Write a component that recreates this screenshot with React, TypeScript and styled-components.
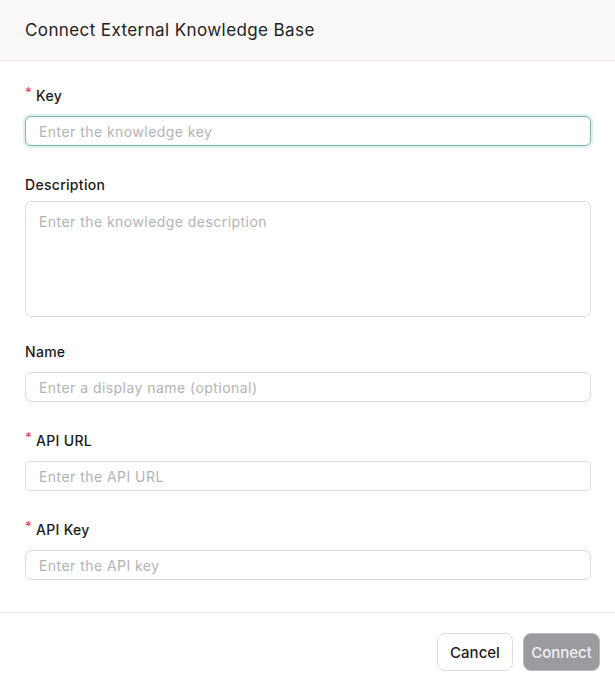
import React from "react";
import styled, { createGlobalStyle } from "styled-components";

const GlobalStyle = createGlobalStyle`
  html, body {
    margin: 0;
    padding: 0;
    background: #ffffff;
  }
  body {
    font-family: Inter, "Noto Sans", "Liberation Sans", sans-serif;
    color: #1c1c1e;
  }
  * {
    box-sizing: border-box;
  }
`;

interface FieldDef {
  id: string;
  label: string;
  placeholder: string;
  required?: boolean;
  multiline?: boolean;
  focused?: boolean;
}

const fields: FieldDef[] = [
  { id: "key", label: "Key", placeholder: "Enter the knowledge key", required: true, focused: true },
  { id: "description", label: "Description", placeholder: "Enter the knowledge description", multiline: true },
  { id: "name", label: "Name", placeholder: "Enter a display name (optional)" },
  { id: "apiUrl", label: "API URL", placeholder: "Enter the API URL", required: true },
  { id: "apiKey", label: "API Key", placeholder: "Enter the API key", required: true },
];

export default function App() {
  return (
    <>
      <GlobalStyle />
      <Dialog>
        <Header>
          <Title>Connect External Knowledge Base</Title>
        </Header>
        <Body>
          {fields.map((f) => (
            <Field key={f.id}>
              <Label htmlFor={f.id}>
                {f.required && <Required>*</Required>}
                {f.label}
              </Label>
              {f.multiline ? (
                <TextArea id={f.id} placeholder={f.placeholder} />
              ) : (
                <Input id={f.id} placeholder={f.placeholder} $focused={f.focused} />
              )}
            </Field>
          ))}
        </Body>
        <Footer>
          <Button>Cancel</Button>
          <Button $primary disabled>
            Connect
          </Button>
        </Footer>
      </Dialog>
    </>
  );
}

const Dialog = styled.div`
  width: 615px;
  display: flex;
  flex-direction: column;
  background: #ffffff;
`;

const Header = styled.div`
  height: 61px;
  display: flex;
  align-items: center;
  padding: 0 25px;
  background: #faf8f9;
  border-bottom: 1px solid #ececec;
`;

const Title = styled.h2`
  margin: 0;
  font-size: 17px;
  font-weight: 400;
  color: #222224;
  letter-spacing: 0.4px;
`;

const Body = styled.div`
  display: flex;
  flex-direction: column;
  gap: 28px;
  padding: 24px 24px 32px 25px;
`;

const Field = styled.div`
  display: flex;
  flex-direction: column;
  gap: 11px;
`;

const Label = styled.label`
  display: flex;
  align-items: center;
  height: 20px;
  font-size: 14px;
  font-weight: 500;
  color: #1a1a1c;
  letter-spacing: 0.3px;
`;

const Required = styled.span`
  color: #e5484d;
  font-size: 13px;
  margin-right: 4px;
  position: relative;
  top: -3px;
`;

const Input = styled.input<{ $focused?: boolean }>`
  height: 30px;
  width: 100%;
  padding: 0 13px;
  font-family: inherit;
  font-size: 14px;
  letter-spacing: 0.45px;
  color: #1c1c1e;
  border-radius: 6px;
  outline: none;
  border: 1px solid ${(p) => (p.$focused ? "#7ab6ad" : "#dcdcdc")};
  box-shadow: ${(p) => (p.$focused ? "0 0 0 2px #e1efed" : "none")};
  &::placeholder {
    color: #b3b3b5;
  }
`;

const TextArea = styled.textarea`
  height: 116px;
  width: 100%;
  margin: -4px 0 -4px;
  padding: 11px 13px;
  resize: none;
  font-family: inherit;
  font-size: 14px;
  letter-spacing: 0.45px;
  color: #1c1c1e;
  border-radius: 6px;
  outline: none;
  border: 1px solid #dcdcdc;
  &::placeholder {
    color: #b3b3b5;
  }
`;

const Footer = styled.div`
  display: flex;
  justify-content: flex-end;
  gap: 10px;
  padding: 20px 15px 20px;
  border-top: 1px solid #e6e6e6;
`;

const Button = styled.button<{ $primary?: boolean }>`
  height: 38px;
  width: ${(p) => (p.$primary ? "77px" : "76px")};
  padding: 0;
  font-family: inherit;
  font-size: 15px;
  font-weight: 500;
  border-radius: 8px;
  cursor: pointer;
  border: 1px solid ${(p) => (p.$primary ? "#b9b9bc" : "#dedede")};
  background: ${(p) => (p.$primary ? "#9b9a9f" : "#ffffff")};
  color: ${(p) => (p.$primary ? "#f2f2f4" : "#1c1c1e")};
  &:disabled {
    cursor: not-allowed;
  }
`;
